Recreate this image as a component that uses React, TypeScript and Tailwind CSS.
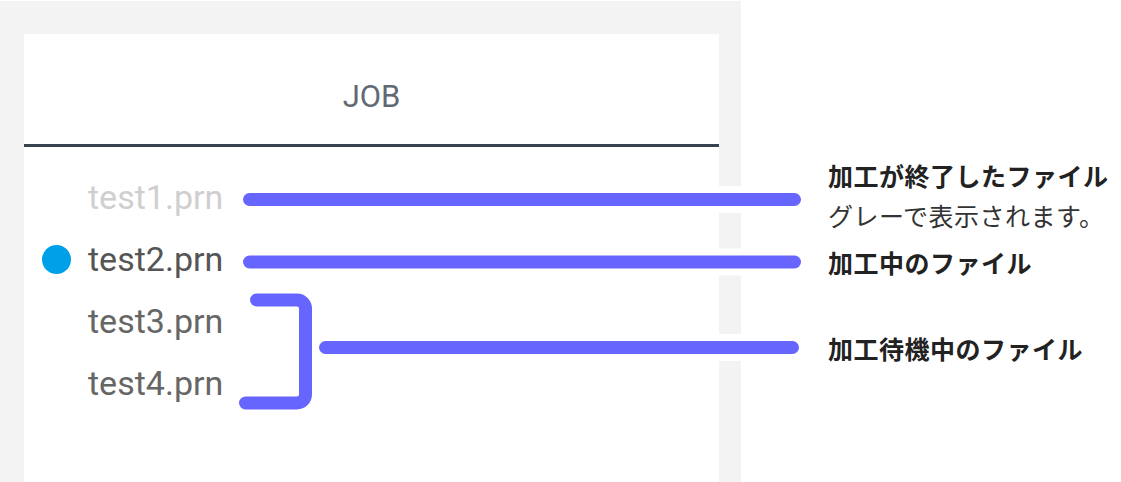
const files = [
  { name: "test1.prn", state: "done" },
  { name: "test2.prn", state: "active" },
  { name: "test3.prn", state: "waiting" },
  { name: "test4.prn", state: "waiting" },
];

const jp = { fontFamily: '"Noto Sans CJK JP", "Noto Sans", sans-serif' };
const roboto = { fontFamily: 'Roboto, "Liberation Sans", sans-serif' };

function JobPanel() {
  return (
    <div className="mt-px flex h-full w-[741px] shrink-0 bg-[#f3f3f3] pt-[33px] pl-6 pr-[22px]">
      <div className="flex flex-1 flex-col bg-white">
        {/* Header */}
        <div
          className="flex h-[110px] items-center justify-center pt-[15px] text-[31px] leading-none text-[#616a74]"
          style={roboto}
        >
          JOB
        </div>
        <div className="h-[3px] bg-[#37424e]" />

        {/* File list */}
        <div className="flex flex-col pt-[19px]" style={roboto}>
          {files.map((f) => (
            <div key={f.name} className="flex h-[62px] items-center pl-[18px]">
              <span
                className={`h-[29px] w-[29px] shrink-0 rounded-full ${
                  f.state === "active" ? "bg-[#00a0e9]" : "bg-transparent"
                }`}
              />
              <span
                className={`ml-[17px] text-[34px] leading-none ${
                  f.state === "done"
                    ? "text-[#cfcfcf]"
                    : f.state === "active"
                    ? "text-[#555555]"
                    : "text-[#666666]"
                }`}
              >
                {f.name}
              </span>
            </div>
          ))}
        </div>
      </div>
    </div>
  );
}

function Notes() {
  return (
    <div className="flex flex-col pl-[87px] pt-[155px] text-[25px] tracking-[0.5px]" style={jp}>
      <div className="leading-[40px]">
        <p className="font-bold text-[#222]">加工が終了したファイル</p>
        <p className="text-[#333]">グレーで表示されます。</p>
      </div>
      <p className="mt-[7px] font-bold leading-[40px] text-[#222]">加工中のファイル</p>
      <p className="mt-[46px] font-bold leading-[40px] text-[#222]">加工待機中のファイル</p>
    </div>
  );
}

// connector strokes drawn over the panel and the notes
function Connectors() {
  const straight = [
    "M 249.5 199.5 H 794.5",
    "M 249.5 262 H 794.5",
    "M 325.5 347.5 H 792.5",
  ];
  const bracket =
    "M 256.5 300 H 297 A 8.5 8.5 0 0 1 305.5 308.5 V 394.5 A 8.5 8.5 0 0 1 297 403 H 245.5";
  return (
    <svg
      className="pointer-events-none absolute inset-0"
      width="1121"
      height="482"
      viewBox="0 0 1121 482"
      fill="none"
    >
      {straight.map((d) => (
        <path key={"h" + d} d={d} stroke="#ffffff" strokeWidth="27" />
      ))}
      {straight.map((d) => (
        <path key={d} d={d} stroke="#6666ff" strokeWidth="13" strokeLinecap="round" />
      ))}
      <path d={bracket} stroke="#6666ff" strokeWidth="13" strokeLinecap="round" strokeLinejoin="round" />
    </svg>
  );
}

export default function App() {
  return (
    <div className="relative h-[482px] w-[1121px] overflow-hidden bg-white">
      <div className="flex h-full">
        <JobPanel />
        <Notes />
      </div>
      <Connectors />
    </div>
  );
}
